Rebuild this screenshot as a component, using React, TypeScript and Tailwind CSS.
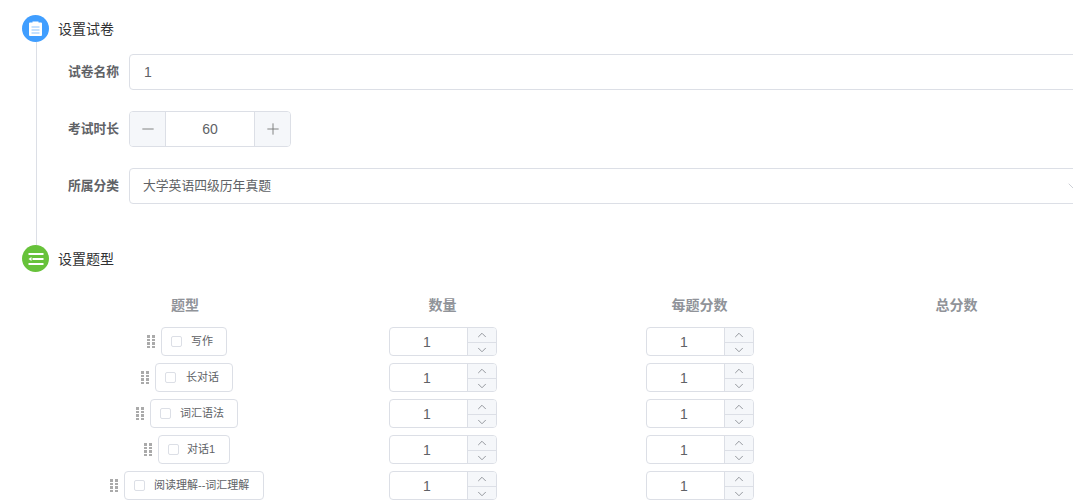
import { ChevronDown, ChevronUp, Minus, Plus } from "lucide-react";

const questionTypes = [
  { name: "写作", width: "w-[66px]", pad: "pl-[29px]", gap: "gap-[6px]" },
  { name: "长对话", width: "w-[78px]", pad: "pl-[30px]", gap: "gap-[6px]" },
  { name: "词汇语法", width: "w-[88px]", pad: "pl-[29px]", gap: "gap-[6px]" },
  { name: "对话1", width: "w-[72px]", pad: "pl-[28px]", gap: "gap-[6px]" },
  { name: "阅读理解--词汇理解", width: "w-[140px]", pad: "pl-[29px]", gap: "gap-[6px]" },
];

function ClipboardIcon() {
  return (
    <div className="flex h-[27px] w-[27px] shrink-0 items-center justify-center rounded-full bg-[#409eff]">
      <svg width="13" height="15" viewBox="0 0 13 15">
        <path d="M1 1.5h2.5V.5h6v1H12a1 1 0 0 1 1 1V14a1 1 0 0 1-1 1H1a1 1 0 0 1-1-1V2.5a1 1 0 0 1 1-1z" fill="#fff" />
        <rect x="2.5" y="5.5" width="8" height="1" fill="#409eff" opacity="0.6" />
        <rect x="2.5" y="8.5" width="8" height="1" fill="#409eff" opacity="0.6" />
        <rect x="2.5" y="11.5" width="8" height="1" fill="#409eff" opacity="0.6" />
      </svg>
    </div>
  );
}

function ListIcon() {
  return (
    <div className="flex h-[27px] w-[27px] shrink-0 items-center justify-center rounded-full bg-[#67c23a]">
      <svg width="16" height="12" viewBox="0 0 16 12">
        <rect x="0.5" y="0" width="15" height="2" fill="#fff" />
        <rect x="4.5" y="5" width="11" height="2" fill="#fff" />
        <path d="M0.5 6 3.5 4v4z" fill="#fff" />
        <rect x="0.5" y="10" width="15" height="2" fill="#fff" />
      </svg>
    </div>
  );
}

function DragHandle() {
  return (
    <div className="grid w-2 shrink-0 grid-cols-2 gap-x-[2px] gap-y-[1px]">
      {Array.from({ length: 8 }).map((_, i) => (
        <span key={i} className="h-[2.5px] w-[3px] bg-[#aaa]" />
      ))}
    </div>
  );
}

function NumberInput() {
  return (
    <div className="relative flex h-[29px] w-[108px] overflow-hidden rounded border border-[#dcdfe6] bg-white">
      <div className="flex w-[77px] items-center justify-center pr-[2px] text-sm text-[#606266]">1</div>
      <div className="flex w-[29px] flex-col border-l border-[#dcdfe6] bg-[#f5f7fa]">
        <div className="flex flex-1 items-center justify-center border-b border-[#dcdfe6]">
          <ChevronUp size={14} strokeWidth={1.4} className="text-[#7f8389]" />
        </div>
        <div className="flex flex-1 items-center justify-center">
          <ChevronDown size={14} strokeWidth={1.4} className="text-[#7f8389]" />
        </div>
      </div>
    </div>
  );
}

function FormRow({ label, children }: { label: string; children: React.ReactNode }) {
  return (
    <div className="flex h-9 items-center">
      <div className="w-[75px] shrink-0 pr-[10px] text-right text-[12.75px] font-bold whitespace-nowrap text-[#606266]">
        {label}
      </div>
      {children}
    </div>
  );
}

export default function App() {
  return (
    <div className="h-screen w-full overflow-hidden bg-white font-['Liberation_Sans','Noto_Sans_CJK_SC',sans-serif]">
      <div className="w-[1100px] pt-[15px] pl-[22px]">
        <div className="flex items-center gap-[9px]">
          <ClipboardIcon />
          <span className="pt-[1px] text-sm text-[#303133]">设置试卷</span>
        </div>

        <div className="ml-[14px] flex h-[203px] flex-col gap-[21px] border-l border-[#dcdfe6] pt-3 pl-[17px]">
          <FormRow label="试卷名称">
            <div className="flex h-9 flex-1 items-center rounded border border-[#dcdfe6] px-[14px] text-sm text-[#606266]">
              1
            </div>
          </FormRow>
          <FormRow label="考试时长">
            <div className="flex h-9 w-[162px] overflow-hidden rounded border border-[#dcdfe6] text-[#606266]">
              <div className="flex w-9 items-center justify-center border-r border-[#dcdfe6] bg-[#f5f7fa] text-[#777]">
                <Minus size={18} strokeWidth={1.2} />
              </div>
              <div className="flex flex-1 items-center justify-center text-sm">60</div>
              <div className="flex w-9 items-center justify-center border-l border-[#dcdfe6] bg-[#f5f7fa] text-[#777]">
                <Plus size={18} strokeWidth={1.2} />
              </div>
            </div>
          </FormRow>
          <FormRow label="所属分类">
            <div className="flex h-9 flex-1 items-center justify-between rounded border border-[#dcdfe6] pr-[18px] pl-[13px] text-[12.8px] text-[#606266]">
              <span>大学英语四级历年真题</span>
              <ChevronDown size={16} strokeWidth={1.2} className="text-[#c0c4cc]" />
            </div>
          </FormRow>
        </div>

        <div className="flex items-center gap-[9px]">
          <ListIcon />
          <span className="text-sm text-[#303133]">设置题型</span>
        </div>

        <div className="mt-[23px] ml-[35px] grid w-[1028px] grid-cols-4 text-center text-sm font-bold text-[#909399]">
          <div className="h-[21px] pr-[1px] leading-5">题型</div>
          <div className="h-[21px] leading-5">数量</div>
          <div className="h-[21px] leading-5">每题分数</div>
          <div className="h-[21px] leading-5">总分数</div>
        </div>

        <div className="mt-[11px] ml-[35px] flex w-[1028px] flex-col gap-[7px]">
          {questionTypes.map((item) => (
            <div key={item.name} className="grid grid-cols-4 items-center">
              <div className={`flex items-center justify-center pl-[3px] ${item.gap}`}>
                <DragHandle />
                <div className={`relative flex h-[29px] items-center rounded border border-[#dcdfe6] text-[11px] whitespace-nowrap text-[#606266] ${item.width} ${item.pad}`}>
                  <span className="absolute left-[9px] h-[11px] w-[11px] rounded-[2px] border border-[#dcdfe6]" />
                  {item.name}
                </div>
              </div>
              <div className="flex justify-center">
                <NumberInput />
              </div>
              <div className="flex justify-center">
                <NumberInput />
              </div>
              <div />
            </div>
          ))}
        </div>
      </div>
    </div>
  );
}
